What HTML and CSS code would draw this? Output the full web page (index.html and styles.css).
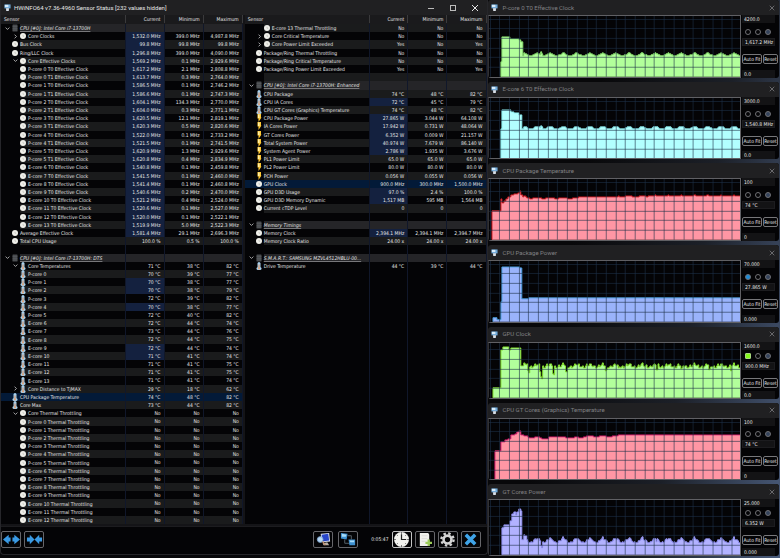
FILE: index.html
```html
<!DOCTYPE html>
<html lang="en">
<head>
    <meta charset="UTF-8">
    <title>HWiNFO64 Sensor Status</title>
    <link rel="stylesheet" href="styles.css">
</head>
<body>
    <svg class="sprite" aria-hidden="true">
        <symbol id="app" viewBox="0 0 16 16">
            <rect x="1" y="1" width="14" height="9" fill="#6fa8d8"/>
            <rect x="2" y="2" width="8" height="5" fill="#d8ecfa"/>
            <path d="M4 10h8l-2 3H6z" fill="#e8f2fa"/>
            <rect x="5" y="10" width="6" height="6" fill="#d8e0e8"/>
        </symbol>
        <symbol id="chip" viewBox="0 0 12 14">
            <rect x="1" y="0" width="10" height="14" rx="1" fill="#484b4e"/>
            <path d="M1 4h10M1 8h10M1 11h10" stroke="#5c6064"/>
        </symbol>
        <symbol id="clock" viewBox="0 0 12 12">
            <circle cx="6" cy="6" r="6" fill="#f0f0ea"/>
            <path d="M6 3.500v3h2.400" fill="none" stroke="#a8a8a0"/>
        </symbol>
        <symbol id="temp" viewBox="0 0 12 16">
            <rect x="3" y="0" width="6" height="12" rx="3" fill="#a8d0ec"/>
            <rect x="1" y="10" width="10" height="6" rx="3" fill="#a8d0ec"/>
            <path d="M6 5v8" stroke="#e08850" stroke-width="1.800"/>
            <circle cx="6" cy="13" r="1.800" fill="#e8a070"/>
        </symbol>
        <symbol id="power" viewBox="0 0 12 16">
            <path d="M3 0h7v7h1L5 16V9H3z" fill="#ffc832"/>
            <path d="M4 1h3v7H4z" fill="#fff0a8"/>
        </symbol>
        <symbol id="open" viewBox="0 0 8 8"><path d="M1 2.500l3 3 3-3" fill="none" stroke="#c8c8c8" stroke-width="1.300"/></symbol>
        <symbol id="shut" viewBox="0 0 8 8"><path d="M2.500 1l3 3-3 3" fill="none" stroke="#c8c8c8" stroke-width="1.300"/></symbol>
        <symbol id="close" viewBox="0 0 8 8"><path d="M1 1l6 6M7 1l-6 6" fill="none" stroke="currentColor"/></symbol>
    </svg>

    <div class="desktop">
        <main class="window">
            <header class="titlebar">
                <svg class="app-icon"><use href="#app"/></svg>
                <h1>HWiNFO64 v7.36-4960 Sensor Status [232 values hidden]</h1>
                <div class="window-controls">
                    <button aria-label="Minimize"><svg viewBox="0 0 8 8"><path d="M1 4.500h6" stroke="#bbb"/></svg></button>
                    <button aria-label="Maximize"><svg viewBox="0 0 8 8"><rect x="1.500" y="1.500" width="5" height="5" fill="none" stroke="#bbb"/></svg></button>
                    <button aria-label="Close"><svg><use href="#close"/></svg></button>
                </div>
            </header>
            <div class="panels">
                <table class="sensors">
                    <thead><tr><th>Sensor</th><th>Current</th><th>Minimum</th><th>Maximum</th></tr></thead>
                    <tbody id="left"></tbody>
                </table>
                <table class="sensors">
                    <thead><tr><th>Sensor</th><th>Current</th><th>Minimum</th><th>Maximum</th></tr></thead>
                    <tbody id="right"></tbody>
                </table>
            </div>
            <footer class="toolbar">
                <button class="tool" aria-label="Expand columns">
                    <svg viewBox="0 0 18 14"><path d="M0 7l6-5v3h2v4H6v3zM18 7l-6-5v3h-2v4h2v3z" fill="#3a9ae4"/></svg>
                </button>
                <button class="tool" aria-label="Shrink columns">
                    <svg viewBox="0 0 18 14"><path d="M9 7L4 2v3H1v4h3v3zM9 7l5-5v3h3v4h-3v3z" fill="#3a9ae4"/></svg>
                </button>
                <span class="spacer"></span>
                <button class="tool" aria-label="Summary">
                    <svg viewBox="0 0 18 14"><path d="M6 1l9-1 1 9-9 1z" fill="#dfe6f4"/><path d="M7 2l7-1 1 7-7 1z" fill="#2846c8"/><path d="M8 11l5-1 2 3H9z" fill="#b8b0a8"/><circle cx="5.500" cy="7" r="3" fill="#b8d8f4" stroke="#7ea6d0"/><path d="M8 9l3 4" stroke="#c09070" stroke-width="1.500"/></svg>
                </button>
                <button class="tool gap" aria-label="Remote monitoring">
                    <svg viewBox="0 0 18 14"><path d="M8 3h4v4M5 7v4h5" fill="none" stroke="#59646c"/><path d="M1 0l7 1-1 6-6-1zM9 7l7 0 0 6-6 0z" fill="#3e90d0"/><path d="M2 1l5 1-1 2-4 0zM10 8l5 0 0 2-4 0z" fill="#a8dcf8"/></svg>
                </button>
                <time class="elapsed gap">0:05:47</time>
                <button class="tool active" aria-label="Reset timer">
                    <svg viewBox="0 0 16 16"><circle cx="8" cy="8" r="8" fill="#f2f2ee"/><path d="M8 2.500V8h5" fill="none" stroke="#222" stroke-width="1.300"/><path d="M8 0v2M8 14v2M0 8h2M14 8h2M3 3l1 1M13 3l-1 1M3 13l1-1M13 13l-1-1" stroke="#666"/></svg>
                </button>
                <button class="tool" aria-label="Log to file">
                    <svg viewBox="0 0 16 16"><path d="M3 1h9l1 2v12H3z" fill="#f0f0ec"/><path d="M5 4h6M5 7h6M5 10h4" stroke="#dcdcd8"/><path d="M12.500 8v7M9 11.500h7" stroke="#9ccc58" stroke-width="2.400"/></svg>
                </button>
                <button class="tool" aria-label="Settings">
                    <svg viewBox="0 0 16 16"><circle cx="8" cy="8" r="6.500" fill="none" stroke="#d4d4d4" stroke-width="2.500" stroke-dasharray="2.600 2.500"/><circle cx="8" cy="8" r="4.200" fill="none" stroke="#d4d4d4" stroke-width="2.800"/></svg>
                </button>
                <button class="tool" aria-label="Exit">
                    <svg viewBox="0 0 16 16"><path d="M3 3l10 10M13 3L3 13" stroke="#3fa4e8" stroke-width="3.800"/></svg>
                </button>
            </footer>
        </main>
        <aside class="graphs" id="graphs"></aside>
    </div>

    <script src="app.js"></script>
</body>
</html>
```

FILE: styles.css
```css
* {
    box-sizing: border-box;
}
body {
    margin: 0;
    background: linear-gradient(100deg, #08080a 70%, #1c2028 85%, #4a5c7c);
    color: #e6e6e6;
    font-family: "DejaVu Sans Condensed", "DejaVu Sans", sans-serif;
    font-size: 5px;
    line-height: 8px;
    overflow: hidden;
}
button, input {
    font: inherit;
    color: inherit;
    margin: 0;
    padding: 0;
    background: none;
    border: none;
}
svg {
    display: block;
}
.sprite {
    display: none;
}
.desktop {
    display: grid;
    grid-template-columns: minmax(0, 5fr) minmax(0, 3fr);
    height: 100vh;
    min-height: 540px;
}

/* main window */
.window {
    display: flex;
    flex-direction: column;
    background: #040406;
    border: 1px solid #26262a;
    border-top: none;
    border-radius: 0 0 4px 4px;
    margin-bottom: 3px;
    min-height: 0;
}
.titlebar {
    display: flex;
    align-items: center;
    gap: 3px;
    flex: 0 0 15px;
    padding: 0 4px 0 3px;
    background: #202022;
    font-family: Roboto, "Liberation Sans", sans-serif;
    font-size: 6px;
}
.titlebar h1, .titlebar h2 {
    flex: 1;
    margin: 0;
    font-size: 6px;
    font-weight: normal;
    white-space: nowrap;
}
.app-icon {
    width: 7px;
    height: 7px;
}
.window-controls {
    display: flex;
    gap: 14px;
    padding-right: 4px;
}
.window-controls button, .window-controls svg {
    width: 8px;
    height: 8px;
}
.panels {
    display: flex;
    flex: 1;
    gap: 2px;
    min-height: 0;
    padding-bottom: 2px;
    background: #141417;
}

/* sensor tables */
.sensors {
    display: flex;
    flex-direction: column;
    flex: 1;
    min-width: 0;
    background: #040406;
}
.sensors tr {
    display: grid;
    grid-template-columns: 125fr 38fr 39fr 39fr;
}
.sensors thead {
    flex: 0 0 9px;
    background: #1a1a1c;
}
.sensors tbody {
    display: grid;
    flex: 1;
    grid-template-rows: repeat(61, minmax(8px, 1fr));
}
.sensors th, .sensors td {
    padding: 0 3px;
    border-right: 1px solid #10172a;
    text-align: right;
    font-weight: normal;
    white-space: nowrap;
    overflow: hidden;
}
.sensors th {
    border-color: #3a3a3c;
}
.sensors th:first-child {
    text-align: left;
}
.sensors .name {
    display: flex;
    align-items: center;
    gap: 2px;
    padding: 0 0 0 4px;
    text-align: left;
}
.sensors .name svg {
    flex: none;
    width: 6px;
    height: 8px;
}
.sensors .depth2 .name {
    padding-left: 12px;
}
.sensors .name .arrow {
    width: 5px;
    height: 5px;
}
.sensors .name .blank {
    visibility: hidden;
}
/* the indent column stays dark next to the striped rows */
.sensors .stripe td, .sensors .group td {
    background-color: #1a1b1c;
}
.sensors .group td {
    background-color: #252528;
    font-style: italic;
}
.sensors .group span {
    text-decoration: underline;
    text-decoration-color: #77777a;
}
.sensors .stripe .name, .sensors .group .name {
    background-image: linear-gradient(#040406, #040406);
    background-size: 19px 100%;
    background-repeat: no-repeat;
}
.sensors .lit td:nth-child(2) {
    background-color: #14213f;
}
.sensors .selected td {
    background: #031a38;
}

/* bottom toolbar */
.toolbar {
    display: flex;
    align-items: center;
    gap: 3px;
    flex: 0 0 28px;
    padding: 0 6px 3px 0;
    border-top: 1px solid #1c1c1f;
}
.spacer {
    flex: 1;
}
.tool {
    display: grid;
    place-items: center;
    width: 20px;
    height: 17px;
    border: 1px solid #66666a;
    border-radius: 2px;
}
.tool svg {
    width: 17px;
    height: 15px;
}
.tool.active {
    border-color: #c4c4c4;
}
.gap {
    margin-left: 2px;
}
.elapsed {
    padding-left: 8px;
}

/* graph windows */
.graphs {
    display: flex;
    flex-direction: column;
    gap: 4px;
    min-height: 0;
    padding: 0 1px 2px 0;
}
.graph {
    display: flex;
    flex-direction: column;
    flex: 13 1 0;
    min-height: 0;
    background: #040406;
    border-radius: 3px;
    overflow: hidden;
}
.graph.short {
    flex-grow: 12;
}
.graph .titlebar {
    color: #808084;
    gap: 5px;
}
.graph .titlebar button svg {
    width: 6px;
    height: 6px;
}
.graph-body {
    display: flex;
    flex: 1;
    min-height: 0;
}
.plot {
    flex: 1;
    min-width: 0;
    border: 1px solid #606064;
    border-left-color: #303034;
}
.plot svg {
    width: 100%;
    height: 100%;
}
.side {
    display: flex;
    flex-direction: column;
    justify-content: space-between;
    width: 38px;
    padding: 0 4px 0 1px;
}
.side input[type="text"] {
    display: block;
    width: 100%;
    height: 8px;
    padding-left: 2px;
    background: #131315;
}
.side .value {
    border: 1px solid #1c1c1f;
    background: #040406;
}
.colors {
    display: flex;
    gap: 4px;
    padding: 0 3px 3px 3px;
}
.colors input {
    appearance: none;
    width: 6px;
    height: 6px;
    border: 1px solid #707074;
    border-radius: 3px;
}
.colors input:checked {
    background: #34435c;
}
.colors .blue:checked {
    background: #1c8cd8;
}
.colors .green:checked {
    background: #84f81c;
    border-color: #a8d880;
    border-radius: 1px;
}
.actions {
    display: flex;
    gap: 1px;
    padding-top: 8px;
    margin-right: -3px;
}
.actions button {
    flex: 13;
    height: 10px;
    border: 1px solid #77777a;
    border-radius: 2px;
    line-height: 8px;
    white-space: nowrap;
    overflow: hidden;
}
.actions .auto {
    flex: 18;
}
```

FILE: app.js
```js
// row: [kind, name, current, min, max, flags]
// flags: 2 = second level, o = open arrow, s = shut arrow, b = blue current, h = selected
const clocks = [
    ['P-core 0 T0', '1,617.2', '2.1', '2,808.8'],
    ['P-core 0 T1', '1,613.7', '0.3', '2,764.0'],
    ['P-core 1 T0', '1,586.5', '0.1', '2,746.2'],
    ['P-core 1 T1', '1,586.6', '0.1', '2,747.3'],
    ['P-core 2 T0', '1,604.1', '134.3', '2,770.0'],
    ['P-core 2 T1', '1,604.0', '0.3', '2,771.1'],
    ['P-core 3 T0', '1,620.5', '12.1', '2,819.1'],
    ['P-core 3 T1', '1,620.3', '0.5', '2,820.6'],
    ['P-core 4 T0', '1,522.0', '0.1', '2,733.2'],
    ['P-core 4 T1', '1,521.5', '0.1', '2,741.5'],
    ['P-core 5 T0', '1,620.9', '1.3', '2,929.6'],
    ['P-core 5 T1', '1,620.8', '0.4', '2,834.9'],
    ['E-core 6 T0', '1,540.8', '0.1', '2,459.8'],
    ['E-core 7 T0', '1,541.5', '0.1', '2,460.0'],
    ['E-core 8 T0', '1,541.4', '0.1', '2,460.8'],
    ['E-core 9 T0', '1,540.6', '0.2', '2,470.0'],
    ['E-core 10 T0', '1,521.2', '0.4', '2,524.0'],
    ['E-core 11 T0', '1,520.6', '0.1', '2,527.0'],
    ['E-core 12 T0', '1,520.0', '0.1', '2,522.1'],
    ['E-core 13 T0', '1,519.9', '5.0', '2,522.3']
].map(c => ['clock', c[0] + ' Effective Clock', c[1] + ' MHz', c[2] + ' MHz', c[3] + ' MHz', '2b']);

const temps = [
    [70, 39, 77], [70, 38, 77, 'b'], [70, 38, 79, 'b'], [72, 39, 82], [70, 38, 77, 'b'],
    [72, 40, 82], [72, 44, 74], [73, 44, 76], [72, 44, 75], [72, 44, 74, 'b'],
    [71, 41, 74, 'b'], [71, 41, 75], [71, 41, 75], [71, 41, 74]
].map((t, i) => ['temp', (i < 6 ? 'P' : 'E') + '-core ' + i, t[0] + ' °C', t[1] + ' °C', t[2] + ' °C', '2' + (t[3] || '')]);

const throttling = [...Array(13).keys()].map(i =>
    ['clock', (i < 6 ? 'P' : 'E') + '-core ' + i + ' Thermal Throttling', 'No', 'No', 'No', '2']);

const leftRows = [
    ['chip', 'CPU [#0]: Intel Core i7-13700H'],
    ['clock', 'Core Clocks', '1,532.0 MHz', '399.0 MHz', '4,987.8 MHz', '2sb'],
    ['clock', 'Bus Clock', '99.8 MHz', '99.8 MHz', '99.8 MHz', 'b'],
    ['clock', 'Ring/LLC Clock', '1,296.8 MHz', '399.0 MHz', '4,090.0 MHz', 'b'],
    ['clock', 'Core Effective Clocks', '1,569.2 MHz', '0.1 MHz', '2,929.6 MHz', '2ob'],
    ...clocks,
    ['clock', 'Average Effective Clock', '1,581.4 MHz', '29.1 MHz', '2,696.3 MHz', 'b'],
    ['clock', 'Total CPU Usage', '100.0 %', '0.5 %', '100.0 %'],
    null,
    ['chip', 'CPU [#0]: Intel Core i7-13700H: DTS'],
    ['temp', 'Core Temperatures', '71 °C', '38 °C', '82 °C', '2o'],
    ...temps,
    ['temp', 'Core Distance to TjMAX', '29 °C', '18 °C', '62 °C', '2s'],
    ['temp', 'CPU Package Temperature', '74 °C', '48 °C', '82 °C', 'h'],
    ['temp', 'Core Max', '73 °C', '44 °C', '82 °C'],
    ['clock', 'Core Thermal Throttling', 'No', 'No', 'No', '2o'],
    ...throttling
];

const rightRows = [
    ['clock', 'E-core 13 Thermal Throttling', 'No', 'No', 'No', '2'],
    ['clock', 'Core Critical Temperature', 'No', 'No', 'No', '2s'],
    ['clock', 'Core Power Limit Exceeded', 'Yes', 'No', 'Yes', '2s'],
    ['clock', 'Package/Ring Thermal Throttling', 'No', 'No', 'No'],
    ['clock', 'Package/Ring Critical Temperature', 'No', 'No', 'No'],
    ['clock', 'Package/Ring Power Limit Exceeded', 'Yes', 'No', 'Yes'],
    null,
    ['chip', 'CPU [#0]: Intel Core i7-13700H: Enhanced'],
    ['temp', 'CPU Package', '74 °C', '48 °C', '82 °C'],
    ['temp', 'CPU IA Cores', '72 °C', '45 °C', '79 °C', 'b'],
    ['temp', 'CPU GT Cores (Graphics) Temperature', '74 °C', '48 °C', '82 °C'],
    ['power', 'CPU Package Power', '27.865 W', '3.044 W', '64.108 W', 'b'],
    ['power', 'IA Cores Power', '17.942 W', '0.731 W', '48.064 W', 'b'],
    ['power', 'GT Cores Power', '6.352 W', '0.009 W', '21.157 W', 'b'],
    ['power', 'Total System Power', '40.974 W', '7.679 W', '86.140 W', 'b'],
    ['power', 'System Agent Power', '2.786 W', '1.935 W', '3.676 W', 'b'],
    ['power', 'PL1 Power Limit', '65.0 W', '65.0 W', '65.0 W'],
    ['power', 'PL2 Power Limit', '80.0 W', '80.0 W', '80.0 W'],
    ['power', 'PCH Power', '0.056 W', '0.055 W', '0.056 W'],
    ['clock', 'GPU Clock', '900.0 MHz', '300.0 MHz', '1,500.0 MHz', 'h'],
    ['clock', 'GPU D3D Usage', '97.0 %', '2.4 %', '100.0 %', 'b'],
    ['clock', 'GPU D3D Memory Dynamic', '1,517 MB', '595 MB', '1,564 MB', 'b'],
    ['clock', 'Current cTDP Level', '0', '0', '0'],
    null,
    ['chip', 'Memory Timings'],
    ['clock', 'Memory Clock', '2,394.1 MHz', '2,394.1 MHz', '2,394.7 MHz', 'b'],
    ['clock', 'Memory Clock Ratio', '24.00 x', '24.00 x', '24.00 x'],
    null,
    ['chip', 'S.M.A.R.T.: SAMSUNG MZVL4512HBLU-00...'],
    ['temp', 'Drive Temperature', '44 °C', '39 °C', '44 °C']
];

function fillTable(id, rows) {
    let html = '';
    for (let i = 0; i < 61; i++) {
        const row = rows[i];
        const striped = i % 2 === 0 && i < rows.length;
        if (!row) {
            html += `<tr class="${striped ? 'stripe' : ''}"><td class="name"></td><td></td><td></td><td></td></tr>`;
            continue;
        }
        const [kind, name, cur = '', min = '', max = '', flags = ''] = row;
        const classes = [];
        if (striped) classes.push('stripe');
        if (kind === 'chip') classes.push('group');
        if (flags.includes('2')) classes.push('depth2');
        if (flags.includes('b')) classes.push('lit');
        if (flags.includes('h')) classes.push('selected');
        const open = kind === 'chip' || flags.includes('o');
        const arrow = open || flags.includes('s') ? '' : ' blank';
        html += `<tr class="${classes.join(' ')}">
            <td class="name"><svg class="arrow${arrow}"><use href="#${open ? 'open' : 'shut'}"/></svg><svg><use href="#${kind}"/></svg><span>${name}</span></td>
            <td>${cur}</td><td>${min}</td><td>${max}</td></tr>`;
    }
    document.getElementById(id).innerHTML = html;
}

fillTable('left', leftRows);
fillTable('right', rightRows);

// points: [x, height %], held until the next point; x runs over 253 samples
// ripple: height of the waves once the load has settled
const graphs = [
    {
        name: 'P-core 0 T0 Effective Clock', max: '4200.0', min: '0.0', value: '1,617.2 MHz',
        fill: '#b2ff9b', line: '#8ae070', ripple: 5,
        points: [[0, 0], [12, 24], [13, 66], [21, 63], [30, 61], [32, 58], [34, 34]],
        dips: [[52, 5], [53, 3]]
    },
    {
        name: 'E-core 6 T0 Effective Clock', max: '3000.0', min: '0.0', value: '1,540.8 MHz',
        fill: '#b2ffff', line: '#8cecf0', ripple: 4,
        points: [[0, 0], [12, 50], [13, 80], [16, 81], [22, 77], [25, 75], [30, 72], [33, 50], [34, 49]],
        dips: [[52, 4], [53, 3]]
    },
    {
        name: 'CPU Package Temperature', max: '100', min: '0', value: '74 °C',
        fill: '#ff96a4', line: '#d01c24', ripple: 1,
        points: [[3, 48], [12, 68], [13, 60], [15, 64], [17, 67], [19, 70], [22, 73], [25, 75], [29, 77], [31, 80],
            [32, 74], [34, 71], [37, 69], [41, 68], [75, 68], [90, 70], [130, 71], [160, 72], [205, 72]]
    },
    {
        name: 'CPU Package Power', max: '70.000', min: '0.000', value: '27.865 W', accent: 'blue',
        fill: '#9ab3fb', line: '#4aa0e0', ripple: 0,
        points: [[0, 0], [4, 6], [8, 4], [12, 33], [13, 90], [31, 88], [33, 37.5], [40, 39]]
    },
    {
        name: 'GPU Clock', max: '1600.0', min: '0.0', value: '900.0 MHz', accent: 'green', short: true,
        fill: '#b2ff9b', line: '#86e030', ripple: 6, jitter: 4,
        points: [[4, 19], [12, 87], [14, 93], [20, 88], [22, 91], [32, 59], [37, 56]],
        dips: [[39, -6], [40, -8], [51, -9], [52, -18], [53, -22], [64, -14], [65, -16], [77, -12], [78, -12],
            [117, -10], [118, -8], [130, -7], [168, -8], [169, -10], [193, -9], [194, -8], [221, -10], [222, -9], [243, -7]]
    },
    {
        name: 'CPU GT Cores (Graphics) Temperature', max: '100', min: '0', value: '74 °C',
        fill: '#ff96a4', line: '#d82070', ripple: 1,
        points: [[6, 47], [12, 62], [16, 65], [19, 68], [22, 73], [26, 75], [28, 79], [30, 81], [32, 73], [35, 71],
            [40, 69], [53, 67], [60, 70], [75, 69], [95, 71], [130, 73], [200, 73]]
    },
    {
        name: 'GT Cores Power', max: '25.000', min: '0.000', value: '6.352 W', short: true,
        fill: '#b2b2ff', line: '#9494f4', ripple: 9, jitter: 2,
        points: [[13, 50], [15, 54], [21, 61], [23, 74], [25, 79], [27, 72], [28, 78], [30, 84], [32, 80], [33, 28], [38, 22]],
        dips: [[52, -6], [53, -9], [168, -4]]
    }
];

function heightAt(g, x) {
    let h = 0;
    for (const p of g.points) {
        if (x >= p[0]) h = p[1];
    }
    if (x > 34) {
        const wave = Math.cos((x - 48) / 13.2 * 2 * Math.PI);
        h += g.ripple * Math.max(0, Math.round((wave + 0.8) * 2) / 4);
        if (g.jitter) h += g.jitter * ((x * 7 + (x >> 2) * 5) % 3 - 1) / 2;
    }
    for (const d of g.dips || []) {
        if (x === d[0]) h += d[1];
    }
    return h;
}

function drawPlot(el, g) {
    const w = el.clientWidth;
    const h = el.clientHeight;
    let line = '';
    let started = false;
    for (let x = 0; x < 253; x++) {
        const v = heightAt(g, x);
        const y = Math.round(h - v / 100 * h);
        const x0 = x * w / 253;
        if (!started && v === 0) continue;
        line += started ? `V${y}` : `M${x0} ${h}V${y}`;
        line += `H${(x + 1) * w / 253}`;
        started = true;
    }
    let grid = '';
    for (let x = w - 9; x > 0; x -= 9.7) grid += `M${Math.round(x) + 0.5} 0V${h}`;
    for (let y = h - 10; y > 0; y -= 9.7) grid += `M0 ${Math.round(y) + 0.5}H${w}`;
    el.innerHTML = `<svg viewBox="0 0 ${w} ${h}" preserveAspectRatio="none">
        <path d="${line}V${h}" fill="${g.fill}"/>
        <path d="${line}" fill="none" stroke="${g.line}"/>
        <path d="${grid}" stroke="#1e3048" stroke-opacity="0.6"/>
    </svg>`;
}

const holder = document.getElementById('graphs');
graphs.forEach(g => {
    const win = document.createElement('section');
    win.className = 'graph' + (g.short ? ' short' : '');
    win.innerHTML = `
        <header class="titlebar">
            <svg class="app-icon"><use href="#app"/></svg>
            <h2>${g.name}</h2>
            <button aria-label="Close"><svg><use href="#close"/></svg></button>
        </header>
        <div class="graph-body">
            <div class="plot"></div>
            <div class="side">
                <input type="text" aria-label="Maximum" value="${g.max}">
                <div>
                    <div class="colors">
                        <input type="checkbox" aria-label="Line colour" class="${g.accent || ''}" ${g.accent ? 'checked' : ''}>
                        <input type="checkbox" aria-label="Background colour">
                        <input type="checkbox" aria-label="Grid colour" checked>
                    </div>
                    <input type="text" class="value" aria-label="Value" value="${g.value}">
                    <div class="actions"><button class="auto">Auto Fit</button><button>Reset</button></div>
                </div>
                <input type="text" aria-label="Minimum" value="${g.min}">
            </div>
        </div>`;
    holder.appendChild(win);
});

function drawAll() {
    document.querySelectorAll('.plot').forEach((el, i) => {
        el.innerHTML = '';
        drawPlot(el, graphs[i]);
    });
}
drawAll();
window.addEventListener('resize', drawAll);
```
